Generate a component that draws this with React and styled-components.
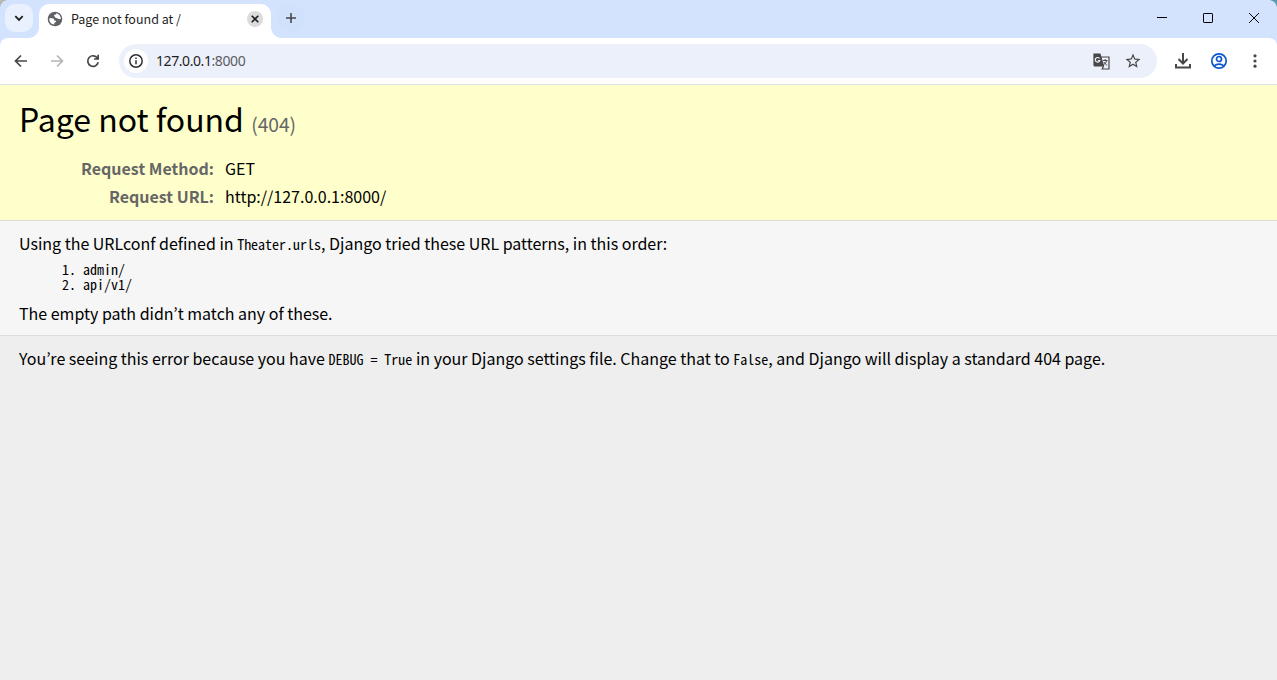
import React from "react";
import styled, { createGlobalStyle } from "styled-components";
import { MdStarOutline } from "react-icons/md";

const GlobalStyle = createGlobalStyle`
  * { box-sizing: border-box; }
  body {
    margin: 0;
    background: #eee;
    color: #000;
    font-family: "Noto Sans CJK KR", sans-serif;
  }
`;

const Window = styled.div`
  display: flex;
  flex-direction: column;
  height: 680px;
  overflow: hidden;
  background: #eee;
`;

const Chrome = styled.div`
  flex: none;
  background:
    radial-gradient(circle at 0 100%, transparent 7.5px, #5b9bb0 8.2px) right top / 8px 8px no-repeat,
    radial-gradient(circle at 100% 100%, transparent 7.5px, #b5b8ae 8.2px) left top / 8px 8px no-repeat,
    #d3e3fd;
`;

const TabStrip = styled.div`
  display: flex;
  height: 38px;
  padding: 4px 0 0 5px;
`;

const TabSearch = styled.div`
  display: flex;
  align-items: center;
  justify-content: center;
  width: 28px;
  height: 28px;
  margin-right: 6px;
  border-radius: 10px;
  background: #e9f1fe;
`;

const Tab = styled.div`
  position: relative;
  display: flex;
  align-items: center;
  width: 232px;
  height: 34px;
  padding: 0 8px 5px 8px;
  background: #fff;
  border-radius: 10px 10px 0 0;
  &::before, &::after {
    content: "";
    position: absolute;
    bottom: 0;
    width: 10px;
    height: 10px;
  }
  &::before {
    left: -10px;
    background: radial-gradient(circle at 0 0, transparent 9.5px, #fff 10px);
  }
  &::after {
    right: -10px;
    background: radial-gradient(circle at 100% 0, transparent 9.5px, #fff 10px);
  }
`;

const TabTitle = styled.span`
  flex: 1;
  margin: 1px 0 0 8px;
  font-size: 12.5px;
  line-height: 18px;
  color: #1f1f1f;
  white-space: nowrap;
`;

const TabClose = styled.span`
  display: flex;
  align-items: center;
  justify-content: center;
  width: 16px;
  height: 16px;
  border-radius: 50%;
  background: #dcdcdc;
`;

const NewTab = styled.div`
  display: flex;
  align-items: center;
  justify-content: center;
  width: 28px;
  height: 28px;
  margin-left: 6px;
  border-radius: 50%;
  background: #d0e1fc;
`;

const WindowControls = styled.div`
  display: flex;
  margin: -4px 0 0 auto;
`;

const WindowButton = styled.div`
  display: flex;
  align-items: center;
  justify-content: center;
  width: 46px;
  height: 36px;
`;

const Toolbar = styled.div`
  display: flex;
  align-items: center;
  height: 47px;
  padding: 0 4px 0 3px;
  background: #fff;
  border-bottom: 1px solid #dfe1e5;
  border-radius: 8px 8px 0 0;
`;

const ToolButton = styled.div`
  display: flex;
  align-items: center;
  justify-content: center;
  width: 36px;
  height: 34px;
  color: ${(p) => p.$color || "#474747"};
`;

const AddressBar = styled.div`
  display: flex;
  align-items: center;
  flex: 1;
  height: 34px;
  margin: 0 8px 0 8px;
  padding: 0 8px 0 5px;
  border-radius: 17px;
  background: #ecf0fa;
`;

const SiteInfo = styled.span`
  display: flex;
  align-items: center;
  justify-content: center;
  width: 24px;
  height: 24px;
  border-radius: 50%;
  background: #fff;
`;

const Url = styled.span`
  flex: 1;
  margin-left: 8px;
  font: 14px/20px "Noto Sans", sans-serif;
  letter-spacing: -0.42px;
  color: #1f1f1f;
`;

const Port = styled.span`
  color: #5a5d61;
`;

const AddressAction = styled.span`
  display: flex;
  align-items: center;
  justify-content: center;
  width: 32px;
  height: 28px;
  color: #474747;
`;

const Summary = styled.header`
  flex: none;
  height: 136px;
  padding: 9px 20px 0 19px;
  background: #ffc;
  border-bottom: 1px solid #ddd;
`;

const Title = styled.h1`
  margin: 0 0 12px;
  font-size: 32px;
  font-weight: 400;
  line-height: 48px;
`;

const StatusCode = styled.small`
  font-size: 19.2px;
  line-height: 1;
  color: #666;
`;

const Meta = styled.dl`
  display: grid;
  grid-template-columns: 195px 1fr;
  column-gap: 11px;
  margin: 0;
  font-size: 16px;
  line-height: 28px;
`;

const MetaName = styled.dt`
  font-weight: 700;
  color: #666;
  text-align: right;
`;

const MetaValue = styled.dd`
  margin: 0;
`;

const Info = styled.main`
  flex: none;
  height: 115px;
  padding: 10px 19px 0;
  background: #f6f6f6;
  border-bottom: 1px solid #ddd;
`;

const Explanation = styled.footer`
  padding: 10px 19px 0;
`;

const Text = styled.p`
  margin: 0;
  font-size: 16px;
  line-height: 24px;
  letter-spacing: -0.008px;
  white-space: nowrap;
`;

const Code = styled.code`
  font-family: "Noto Sans CJK KR", monospace;
  font-feature-settings: "hwid";
  font-size: 14px;
  line-height: 1;
`;

const Patterns = styled.ol`
  display: grid;
  grid-auto-rows: 15px;
  margin: 7px 0 9px;
  padding: 0 0 0 64px;
  font-size: 14px;
  line-height: 15px;
  font-feature-settings: "hwid";
`;

function Stroke({ w = 16, width = 1.7, color = "currentColor", children }) {
  return (
    <svg width={w} height={w} viewBox={`0 0 ${w} ${w}`} fill="none" stroke={color} strokeWidth={width}>
      {children}
    </svg>
  );
}

function Globe() {
  return (
    <svg width="16" height="16" viewBox="0 0 16 16">
      <circle cx="8" cy="8" r="7.3" fill="#5f6368" />
      <path
        d="M2.300 7.200c2.200 0 4.200-.3 4.700 1 .4 1 .3 1.500 1.600 1.500.9 0 .7 1.300-.2 1.600-1 .3-1.200 1-1.200 2.200C3.800 13.200 2 10.500 2.300 7.200z"
        fill="#fff"
      />
      <path
        d="M9.300 2.200c-.2 1.200-.7 1.400-1.600 1.500-.9.100-.8 1.300-.2 1.700.8.500.9 1.700 2 1.700 1.200 0 1.400.8 2.200.8h2.200C13.900 5 12.100 2.800 9.300 2.200z"
        fill="#fff"
      />
    </svg>
  );
}

const meta = [
  ["Request Method:", "GET"],
  ["Request URL:", "http://127.0.0.1:8000/"],
];

const patterns = ["admin/", "api/v1/"];

export default function App() {
  return (
    <Window>
      <GlobalStyle />
      <Chrome>
        <TabStrip>
          <TabSearch>
            <Stroke w={10} color="#1f1f1f" width={1.8}><path d="M1.300 3.200 5 6.900l3.700-3.700" /></Stroke>
          </TabSearch>
          <Tab>
            <Globe />
            <TabTitle>Page not found at /</TabTitle>
            <TabClose>
              <Stroke w={8} color="#1f1f1f" width={1.6}><path d="m.7.7 6.600 6.600m0-6.600L.7 7.300" /></Stroke>
            </TabClose>
          </Tab>
          <NewTab>
            <Stroke w={12} color="#474747" width={1.6}><path d="M6 1v10M1 6h10" /></Stroke>
          </NewTab>
          <WindowControls>
            <WindowButton><Stroke w={10} color="#000" width={1}><path d="M0 4.500h10" /></Stroke></WindowButton>
            <WindowButton><Stroke w={10} color="#000" width={1}><rect x=".5" y=".5" width="9" height="9" rx=".6" /></Stroke></WindowButton>
            <WindowButton><Stroke w={10} color="#000" width={1}><path d="m0 0 10 10m0-10L0 10" /></Stroke></WindowButton>
          </WindowControls>
        </TabStrip>

        <Toolbar>
          <ToolButton><Stroke><path d="M14 8H3M8 2.500 2.500 8 8 13.500" /></Stroke></ToolButton>
          <ToolButton $color="#b5b5b5"><Stroke><path d="M2 8h11M8 2.500 13.500 8 8 13.500" /></Stroke></ToolButton>
          <ToolButton>
            <Stroke><path d="M13.200 9.300A5.300 5.300 0 1 1 12.500 5.200M13.200 1.800v4.200H9" /></Stroke>
          </ToolButton>
          <AddressBar>
            <SiteInfo>
              <Stroke w={16} color="#303134" width={1.5}>
                <circle cx="8" cy="8" r="6.2" /><path d="M8 7.200v4M8 4.500v1.600" />
              </Stroke>
            </SiteInfo>
            <Url>127.0.0.1<Port>:8000</Port></Url>
            <AddressAction>
              <Stroke w={17} width={1.2}>
                <path d="M1 1h6l3.500 12H2a1 1 0 0 1-1-1z" fill="currentColor" />
                <path d="M8 4h8v12H9.200l1.300-3" />
                <path d="M10 7.500h4.500M12.200 6v1.500M13.700 7.500c-.4 2-1.700 3.500-3.200 4.500M10.800 9l3.200 3.500" strokeWidth="1" />
                <path d="M6.500 5.500A2.300 2.300 0 1 0 6.800 7.500H4.800" stroke="#ecf0fa" />
              </Stroke>
            </AddressAction>
            <AddressAction><MdStarOutline size={18} /></AddressAction>
          </AddressBar>
          <ToolButton>
            <Stroke w={18} width={2}><path d="M9 1v10M4.500 7 9 11.500 13.500 7M2 12v3.500h14V12" /></Stroke>
          </ToolButton>
          <ToolButton $color="#0b57d0">
            <Stroke w={18} width={1.7}>
              <circle cx="9" cy="9" r="7.2" /><circle cx="9" cy="7" r="2.5" />
              <path d="M4 14c2.700-2.600 7.300-2.600 10 0" />
            </Stroke>
          </ToolButton>
          <ToolButton>
            <svg width="16" height="16" fill="currentColor">
              <circle cx="8" cy="2.8" r="1.6" /><circle cx="8" cy="8" r="1.6" /><circle cx="8" cy="13.2" r="1.6" />
            </svg>
          </ToolButton>
        </Toolbar>
      </Chrome>

      <Summary>
        <Title>Page not found <StatusCode>(404)</StatusCode></Title>
        <Meta>
          {meta.map(([name, value]) => (
            <React.Fragment key={name}>
              <MetaName>{name}</MetaName>
              <MetaValue>{value}</MetaValue>
            </React.Fragment>
          ))}
        </Meta>
      </Summary>

      <Info>
        <Text>
          Using the URLconf defined in <Code>Theater.urls</Code>, Django tried these URL patterns, in this order:
        </Text>
        <Patterns>
          {patterns.map((p) => <li key={p}>{p}</li>)}
        </Patterns>
        <Text>The empty path didn’t match any of these.</Text>
      </Info>

      <Explanation>
        <Text>
          You’re seeing this error because you have <Code>DEBUG = True</Code> in your Django settings file. Change that
          to <Code>False</Code>, and Django will display a standard 404 page.
        </Text>
      </Explanation>
    </Window>
  );
}
